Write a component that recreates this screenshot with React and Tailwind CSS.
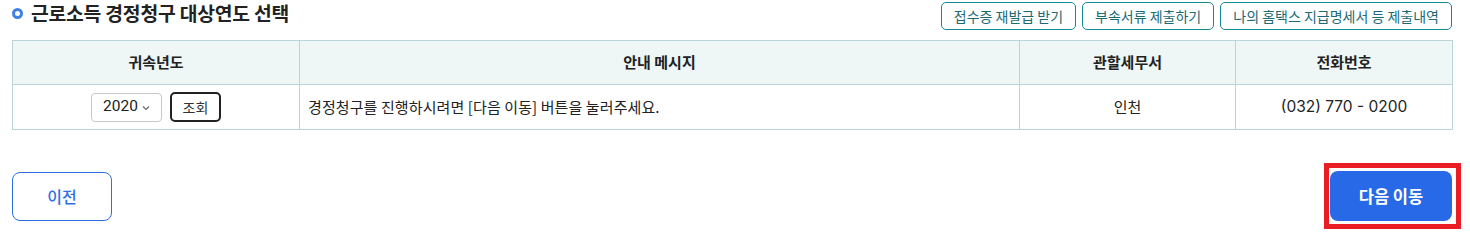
import React, { useState } from "react";

const font = { fontFamily: '"Noto Sans CJK KR", "Noto Sans", Roboto, sans-serif' };

const topButtons = ["접수증 재발급 받기", "부속서류 제출하기", "나의 홈택스 지급명세서 등 제출내역"];

const App = () => {
  const [year, setYear] = useState("2020");

  return (
    <div className="w-[1470px] h-[249px] bg-white text-[#222]" style={font}>
      <div className="w-[1440px] ml-[12px]">
        {/* Title row */}
        <div className="flex items-center justify-between h-[30px] pt-[1px]">
          <div className="flex items-center gap-[8px]">
            <span className="block shrink-0 w-[11px] h-[11px] rounded-full border-[3px] border-[#3f80e6] -mt-[3px]" />
            <h2 className="text-[19.3px] font-bold leading-none tracking-[-0.2px] -mt-[3px]">
              근로소득 경정청구 대상연도 선택
            </h2>
          </div>
          <div className="flex items-center gap-[6px]">
            {topButtons.map((label) => (
              <button
                key={label}
                className="h-[28px] px-[12px] border border-[#178a93] rounded-[5px] text-[14px] text-[#1b6a74] leading-none bg-white"
              >
                {label}
              </button>
            ))}
          </div>
        </div>

        {/* Table */}
        <table className="w-full table-fixed border-collapse mt-[10px] text-[15px]">
          <colgroup>
            <col className="w-[287px]" />
            <col className="w-[720px]" />
            <col className="w-[216px]" />
            <col className="w-[217px]" />
          </colgroup>
          <thead>
            <tr className="bg-[#eef7f5] h-[44px]">
              <th className="border border-[#b8d5d8] font-bold text-center">귀속년도</th>
              <th className="border border-[#b8d5d8] font-bold text-center">안내 메시지</th>
              <th className="border border-[#b8d5d8] font-bold text-center">관할세무서</th>
              <th className="border border-[#b8d5d8] font-bold text-center">전화번호</th>
            </tr>
          </thead>
          <tbody>
            <tr className="h-[45px]">
              <td className="border border-[#b8d5d8] text-center">
                <div className="flex items-center justify-center gap-[8px]">
                  <div className="relative h-[29px] w-[71px] border border-[#c8c8c8] rounded-[4px] flex items-center pl-[11px]">
                    <span className="text-[15.5px] leading-none" style={{ fontFamily: "Roboto, sans-serif" }}>
                      {year}
                    </span>
                    <svg className="ml-[4px] mt-[1px]" width="8" height="6" viewBox="0 0 8 6">
                      <path d="M1 1.5 L4 4.5 L7 1.5" fill="none" stroke="#666" strokeWidth="1.1" />
                    </svg>
                    <select
                      value={year}
                      onChange={(e) => setYear(e.target.value)}
                      className="absolute inset-0 opacity-0 cursor-pointer"
                    >
                      <option>2020</option>
                      <option>2021</option>
                      <option>2022</option>
                    </select>
                  </div>
                  <button className="h-[30px] w-[51px] border-2 border-[#222] rounded-[5px] text-[14px] text-[#333] leading-none">
                    조회
                  </button>
                </div>
              </td>
              <td className="border border-[#b8d5d8] text-left pl-[8px] tracking-[0.1px]">
                경정청구를 진행하시려면 [다음 이동] 버튼을 눌러주세요.
              </td>
              <td className="border border-[#b8d5d8] text-center">인천</td>
              <td className="border border-[#b8d5d8] text-center text-[15.5px]" style={{ fontFamily: "Inter, sans-serif" }}>
                (032) 770 - 0200
              </td>
            </tr>
          </tbody>
        </table>

        {/* Bottom buttons */}
        <div className="flex items-center justify-between mt-[41px]">
          <button className="w-[100px] h-[49px] border border-[#2f6fe3] rounded-[8px] text-[#2f6fe3] text-[16px] font-medium bg-white">
            이전
          </button>
          <div className="relative">
            <button className="w-[122px] h-[50px] rounded-[8px] bg-[#2769e6] text-white text-[16.5px] font-bold">
              다음 이동
            </button>
            <span className="pointer-events-none absolute -left-[6px] -top-[8px] -right-[9px] -bottom-[8px] border-[5px] border-[#ea1c24]" />
          </div>
        </div>
      </div>
    </div>
  );
};

export default App;
